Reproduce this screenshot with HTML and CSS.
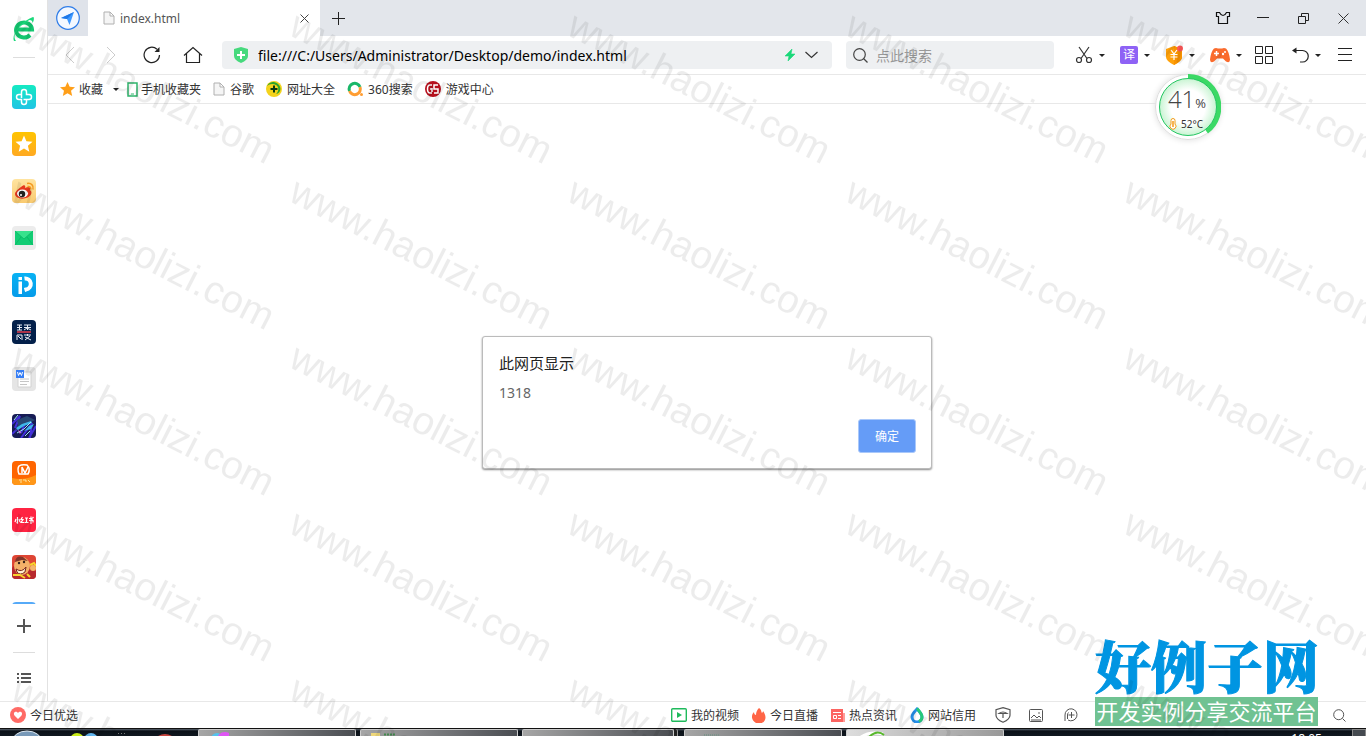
FILE: index.html
```html
<!DOCTYPE html>
<html lang="zh-CN">
  <head>
    <meta charset="utf-8" />
    <title>index.html</title>
    <link rel="stylesheet" href="styles.css">
  </head>
  <body>
    <div class="window">
      <aside class="sidebar">
        <a class="brand" href="#" aria-label="360">
          <svg width="24" height="26" viewBox="0 0 24 26"><path d="M5 13.500h15a8 7.500 0 1 0-2 5.500" fill="none" stroke="#13c770" stroke-width="4"/><path d="M2 25C-1 19 9 5 21 1c1.500 0 1 4-.5 6 0-2-1-3-3-3C9 8 3 16 2.500 20c0 2 .5 4 1.500 5z" fill="#1cd97c"/></svg>
        </a>
        <hr>
        <nav class="apps">
          <a class="app cyan" href="#" aria-label="医疗"><svg viewBox="0 0 24 24"><path d="M9.500 13V7a2.500 2.500 0 0 1 5 0v2.500H17a2.500 2.500 0 0 1 0 5h-5.500M14.500 14.500V17a2.500 2.500 0 0 1-5 0v-2.500H7a2.500 2.500 0 0 1 0-5h2.500" fill="none" stroke="#fff" stroke-width="1.500"/></svg></a>
          <a class="app yellow" href="#" aria-label="收藏"><svg viewBox="0 0 24 24"><path d="M12 3.500l2.400 5.700 6.100.5-4.600 4 1.400 6-5.300-3.200-5.300 3.200 1.400-6-4.600-4 6.100-.5z" fill="#fff"/></svg></a>
          <a class="app weibo" href="#" aria-label="微博"><svg viewBox="0 0 24 24"><path d="M9 8c3-3 5-2 4 1 4-2 6-1 5 2 3 2 1 7-4 8-6 2-11-1-11-4 0-2 3-5 6-7z" fill="#e6371d"/><ellipse cx="10.500" cy="14.500" rx="5.500" ry="4" fill="#fff"/><circle cx="10" cy="15" r="3.200" fill="#222"/><circle cx="9" cy="16" r="1" fill="#fff"/><path d="M15 4.500c4-1 7 2 6 6M15.500 7.500c2-.5 4 1 3 3" fill="none" stroke="#f49a20" stroke-width="1.500"/></svg></a>
          <a class="app mail" href="#" aria-label="邮箱"><svg viewBox="0 0 24 24"><path d="M3 5h18v14H3z" fill="#13cc74"/><path d="M3 5h18l-9 8z" fill="#38e28d"/><path d="M3 5l9 8 9-8M3 19l6-8M21 19l-6-8" fill="none" stroke="#08b763" stroke-width=".8"/></svg></a>
          <a class="app blue" href="#" aria-label="iP"><svg viewBox="0 0 24 24"><path d="M6.500 4h3.500v3H6.500zM6.500 8.500h3.500V21H6.500z" fill="#fff"/><path d="M12.500 5.500a5.500 5.500 0 0 1 1.500 11l-1.500.5" fill="none" stroke="#fff" stroke-width="4"/></svg></a>
          <a class="app navy" href="#" aria-label="环球网校"><svg viewBox="0 0 24 24"><path d="M5 5h5M7.500 5v5M5 7.500h5M5 10h5M12 5h7M15.500 5v5M12 7.500h7M12 10l3-2 4 2M5 20v-5h5v5M6 16l3 3M12 15h7M15.500 14v2M13 17l6 3M18 16l-5 4" fill="none" stroke="#e8edf5"/><path d="M5 12h14" stroke="#e43b4d" stroke-width="1.500"/></svg></a>
          <a class="app doc" href="#" aria-label="文档"><svg viewBox="0 0 24 24"><path d="M6 5h13v15H6z" fill="#fff" stroke="#d2d2d2"/><path d="M8 12h9M8 14.500h9M8 17.500h7" stroke="#c6c6c6"/><path d="M4 3h8v8H4z" fill="#367ef5"/><path d="M5.500 5l1 3.500L8 5.500l1.500 3L10.500 5" fill="none" stroke="#fff"/></svg></a>
          <a class="app game" href="#" aria-label="游戏"><svg viewBox="0 0 24 24"><path d="M0 10L8 2l-5 12M0 20L14 7 9 19M9 24l11-15-2 15M17 24l7-12" fill="none" stroke="#4330d9" stroke-width="2"/><path d="M5 6l10-4 8 4-6 3-10 4-4 5 3-8z" fill="#284873"/><path d="M4 14l6-4 9-3 1 2-8 3-6 4M12 17l5-5 5-2-3 5z" fill="#3eb7e9"/><path d="M5 19l7-4 7-7M2 6l4-5M13 22l5-5" fill="none" stroke="#9ee6f5"/><path d="M6 16l3 2-1 2z" fill="#eb81e4"/></svg></a>
          <a class="app orange" href="#" aria-label="芒果TV"><svg viewBox="0 0 24 24"><path d="M0 17q12 3 24-3v10H0z" fill="#ff9718"/><path d="M7 5q-2 3 0 8h9q3-5-1-9-5-1-8 1z" fill="none" stroke="#fff" stroke-width="1.500"/><path d="M10 6v6M10 6l3 6 3-6" fill="none" stroke="#fff" stroke-width="1.500"/><path d="M7 19h3M8 21h2M11 19h3v2M16 19l2 2" stroke="#fff5bf" stroke-width=".8" fill="none"/></svg></a>
          <a class="app red" href="#" aria-label="小红书"><svg viewBox="0 0 24 24"><path d="M5.500 9v6l-1-.5M4 11l-1 3M7 11l1 3M10.500 9L9 11.500h2L9 14.500h3M13 10h3M14.500 10v4.500M12.500 14.500h4M17 10.500h3v1.500M17 12.500h4v2M19 8.500V16M20.500 9l1 1" fill="none" stroke="#fff" stroke-width="1.200"/></svg></a>
          <a class="app face" href="#" aria-label="小游戏"><svg viewBox="0 0 24 24"><path d="M0 24V13l5-6h8l6 6 5 3v8z" fill="#b8292e"/><ellipse cx="10" cy="11" rx="8" ry="9" fill="#f4b069"/><path d="M3 7q1-7 8-5l5 4-6-1z" fill="#81352a"/><path d="M4 14q6 4 10-2l-1 5q-5 4-8 0z" fill="#fff0cf" stroke="#78251e"/><circle cx="7" cy="8" r="1.200" fill="#372019"/><circle cx="12" cy="7" r="1.200" fill="#372019"/><circle cx="21" cy="13" r="3" fill="#f4b76c"/><path d="M18 10l4-2 2 3M15 19l3 3M1 20h7l5 3" stroke="#f7d42c" stroke-width="2" fill="none"/></svg></a>
          <a class="app sky" href="#" aria-label="更多"></a>
        </nav>
        <button class="side-button add" aria-label="添加"><svg width="14" height="14"><path d="M7 0v14M0 7h14" stroke="#555" stroke-width="2"/></svg></button>
        <hr>
        <button class="side-button list" aria-label="列表"><svg width="14" height="12"><path d="M0 2h2M4 2h10M0 6h2M4 6h10M0 10h2M4 10h10" stroke="#555" stroke-width="2"/></svg></button>
      </aside>

      <div class="browser">
        <header class="tabs">
          <button class="pinned" aria-label="主页"><svg width="24" height="24"><circle cx="12" cy="12" r="11.300" fill="#f3f8ff" stroke="#2e7ce8" stroke-width="1.200"/><path d="M18 6l-4.500 13-2.500-6-6-1z" fill="#3d98ff"/><path d="M18 6l-7 7-6-1z" fill="#1c77e8"/></svg></button>
          <div class="tab">
            <svg width="12" height="14"><path d="M1 1h6l4 4v8H1zM7 1v4h4" fill="#f5f5f5" stroke="#b0b0b0"/></svg>
            <span>index.html</span>
            <button aria-label="关闭标签页"><svg width="9" height="9"><path d="M.5.5l8 8M8.500.5l-8 8" stroke="#444"/></svg></button>
          </div>
          <button class="new-tab" aria-label="新标签页"><svg width="13" height="13"><path d="M6.500 0v13M0 6.500h13" stroke="#222"/></svg></button>
          <div class="controls">
            <button aria-label="皮肤"><svg width="16" height="14"><path d="M4.500 1.500H1.500v4h2v7h9v-7h2v-4h-3Q10 4.500 8 4.500T4.500 1.500z" fill="none" stroke="#111" stroke-width="1.200"/></svg></button>
            <button aria-label="最小化"><svg width="12" height="12"><path d="M0 5.500h12" stroke="#222"/></svg></button>
            <button aria-label="还原"><svg width="11" height="11"><path d="M.5 3.500h7v7h-7zM3.500 3V.5h7v7H8" fill="none" stroke="#222"/></svg></button>
            <button aria-label="关闭"><svg width="11" height="11"><path d="M.5.5l10 10M10.500.5l-10 10" stroke="#333"/></svg></button>
          </div>
        </header>

        <div class="toolbar">
          <button class="nav" aria-label="后退"><svg width="10" height="18"><path d="M9 1L1 9l8 8" fill="none" stroke="#ccc"/></svg></button>
          <button class="nav" aria-label="前进"><svg width="10" height="18"><path d="M1 1l8 8-8 8" fill="none" stroke="#ccc"/></svg></button>
          <button class="nav" aria-label="刷新"><svg width="18" height="18"><path d="M16.500 9A7.700 7.700 0 1 1 14 3.200" fill="none" stroke="#222" stroke-width="1.200"/><path d="M16.500 1v5h-5z" fill="#222"/></svg></button>
          <button class="nav" aria-label="主页"><svg width="20" height="18"><path d="M1 9.500l9-8 9 8M3.500 7.500v9h13v-9" fill="none" stroke="#222" stroke-width="1.200"/></svg></button>
          <div class="address">
            <svg width="14" height="16"><path d="M7 0l7 2v7q0 4-7 7-7-3-7-7V2z" fill="#46d97d"/><path d="M7 4v8M3 8h8" stroke="#fff" stroke-width="2"/></svg>
            <input type="text" aria-label="地址" value="file:///C:/Users/Administrator/Desktop/demo/index.html">
            <svg width="10" height="12"><path d="M7 0L0 7h4l-1 5 7-7H6z" fill="#1bd87a" stroke="#1bd87a" stroke-width=".6"/></svg>
            <button aria-label="展开"><svg width="13" height="8"><path d="M.5 1l6 5.500 6-5.500" fill="none" stroke="#333" stroke-width="1.200"/></svg></button>
          </div>
          <div class="search">
            <svg width="15" height="15"><circle cx="6.500" cy="6.500" r="5.800" fill="none" stroke="#444" stroke-width="1.200"/><path d="M10.500 10.500l4 4" stroke="#444" stroke-width="1.200"/></svg>
            <input type="text" aria-label="搜索" placeholder="点此搜索">
          </div>
          <button class="tool" aria-label="截图"><svg width="18" height="18"><path d="M4 1l8 11.500M14 1L6 12.500" fill="none" stroke="#333" stroke-width="1.200"/><circle cx="4" cy="14" r="2.500" fill="none" stroke="#333" stroke-width="1.200"/><circle cx="14" cy="14" r="2.500" fill="none" stroke="#333" stroke-width="1.200"/></svg><i class="caret"></i></button>
          <button class="tool" aria-label="翻译"><span class="translate">译</span><i class="caret"></i></button>
          <button class="tool" aria-label="钱包"><svg width="18" height="20"><path d="M9 1l8 3v8q0 4-8 8-8-4-8-8V4z" fill="#ffa10a"/><path d="M9 1l8 3v8q0 4-8 8z" fill="#f99300"/><path d="M6 5l3 4 3-4M9 9v6M5.500 9.500h7M5.500 12h7" fill="none" stroke="#fff" stroke-width="1.200"/><circle cx="15" cy="3.500" r="3" fill="#ff5858"/></svg><i class="caret"></i></button>
          <button class="tool" aria-label="游戏"><svg width="20" height="16" viewBox="0 0 20 16"><path d="M4 1.500q2-1 4 0h4q2-1 4 0 3 3 4 11 0 4-4 2l-3-3H7l-3 3q-4 2-4-2 1-8 4-11z" fill="#fa6b2d"/><path d="M6.500 4v5M4 6.500h5" stroke="#fff" stroke-width="1.500"/><circle cx="13" cy="7" r="1.200" fill="#fff"/><circle cx="15" cy="5" r="1" fill="#fff"/></svg><i class="caret"></i></button>
          <button class="tool grid" aria-label="应用"><svg width="18" height="18"><path d="M.5.5h7v7h-7zM10.500.5h7v7h-7zM.5 10.500h7v7h-7zM10.500 10.500h7v7h-7z" fill="none" stroke="#222"/></svg></button>
          <button class="tool" aria-label="撤销"><svg width="18" height="16"><path d="M2 3.500h9.500a5.700 5.700 0 0 1 0 11.500H9" fill="none" stroke="#222" stroke-width="1.200"/><path d="M5.500.5L1 3.500l4.500 3z" fill="#222"/></svg><i class="caret"></i></button>
          <button class="menu" aria-label="菜单"><svg width="14" height="14"><path d="M0 .5h14M0 6.500h14M0 12.500h14" stroke="#222"/></svg></button>
        </div>

        <nav class="bookmarks">
          <a href="#" class="star"><svg width="15" height="14" viewBox="0 0 15 14"><path d="M7.500 0l2.200 4.800 5.300.5-4 3.500 1.200 5.200-4.700-2.800L2.800 14 4 8.800 0 5.300l5.300-.5z" fill="#ff9f19"/></svg>收藏 <i class="caret"></i></a>
          <a href="#" class="phone"><svg width="11" height="15"><path d="M1 1h9v13H1z" fill="#fff" stroke="#2eb56c" stroke-width="1.500"/><path d="M4 12h3" stroke="#2eb56c"/></svg>手机收藏夹</a>
          <a href="#"><svg width="12" height="14"><path d="M1 1h6l4 4v8H1zM7 1v4h4" fill="#f5f5f5" stroke="#b0b0b0"/></svg>谷歌</a>
          <a href="#"><svg width="16" height="16"><circle cx="8" cy="8" r="8" fill="#f4d31c"/><path d="M1 5a7 7 0 0 1 12-1c3 4 1 8-3 9 3-3 3-7 0-9S3 3 1 5z" fill="#2ba52c"/><path d="M8 4.500v7M4.500 8h7" stroke="#08370f" stroke-width="2"/></svg>网址大全</a>
          <a href="#"><svg width="16" height="16"><path d="M2.500 10a5.500 5.500 0 1 1 10.500-4" fill="none" stroke="#19b768" stroke-width="3"/><path d="M13 6A5.500 5.500 0 1 1 2.500 10" fill="none" stroke="#ff9d32" stroke-width="3"/><circle cx="14.500" cy="13.500" r="1.500" fill="#ff9d32"/></svg>360搜索</a>
          <a href="#"><svg width="16" height="16"><circle cx="8" cy="8" r="8" fill="#b6101d"/><path d="M7 4H5Q2.500 4 2.500 8T5 12h2M7 7v4M13 4H9v4h4v4H9M5 8h2" fill="none" stroke="#fff" stroke-width="1.500"/></svg>游戏中心</a>
        </nav>

        <main>
          <form class="alert" role="alertdialog" aria-labelledby="alert-title">
            <h1 id="alert-title">此网页显示</h1>
            <p>1318</p>
            <button type="button" class="ok">确定</button>
          </form>
        </main>
      </div>
    </div>

    <footer class="status">
      <a class="daily" href="#"><svg width="16" height="16"><circle cx="8" cy="8" r="8" fill="#ff6b66"/><path d="M8 12L4.500 8.500C2.500 5 6.500 3.500 8 6c1.500-2.500 5.500-1 3.500 2.500z" fill="#fff"/></svg>今日优选</a>
      <a href="#"><svg width="16" height="14"><rect x=".7" y=".7" width="14.600" height="12.600" rx="1" fill="none" stroke="#1fba5c" stroke-width="1.400"/><path d="M6 4v6l5-3z" fill="#1fba5c"/></svg>我的视频</a>
      <a href="#"><svg width="14" height="15"><path d="M7 0c3 2 2 4 3 5 1-1 1-2 1-2 3 4 4 9-1 12H4C-1 12-1 7 2 4c0 2 1 3 2 3 0-3 1-5 3-7z" fill="#ff6546"/></svg>今日直播</a>
      <a href="#"><svg width="14" height="13"><path d="M0 0h12v13H0z" fill="#fc6461"/><path d="M12 4h2v9h-2z" fill="#ff9c98"/><path d="M2 3.500h8M2.500 6.500h3v3h-3zM7 6.500h3M7 9.500h3" fill="none" stroke="#fff"/></svg>热点资讯</a>
      <a href="#"><svg width="14" height="16"><path d="M7 2q5 5 5 8a5 5 0 0 1-10 0q0-3 5-8z" fill="none" stroke="#258fe8" stroke-width="3"/><path d="M7 1.500q5 5.500 5 8.500t-3 4.500" fill="none" stroke="#26c979" stroke-width="3"/></svg>网站信用</a>
      <button class="shield" aria-label="安全"><svg width="16" height="16"><path d="M8 .7l7 2v5.500q0 4-7 7-7-3-7-7V2.700zM4 6.500q4-3 8 0H4zM8 6v5" fill="none" stroke="#555" stroke-width="1.200"/></svg></button>
      <button class="photo" aria-label="图片"><svg width="14" height="13"><rect x=".5" y=".5" width="13" height="12" rx="1" fill="none" stroke="#555"/><path d="M2 9l3-3 3 3 2-2 2 2M2 11h10" fill="none" stroke="#555"/><circle cx="10" cy="4" r=".8" fill="#555"/></svg></button>
      <button class="boost" aria-label="加速"><svg width="14" height="14"><path d="M1 13V7a6 6 0 1 1 3 5M3.500 11V7a3.500 3.500 0 0 1 1-2.500M7.500 4v6M4.500 7h6" fill="none" stroke="#555"/></svg></button>
      <button class="find" aria-label="查找"><svg width="13" height="13"><circle cx="5.700" cy="5.700" r="5" fill="none" stroke="#555"/><path d="M9.500 9.500l3 3" stroke="#555"/></svg></button>
    </footer>

    <div class="taskbar">
      <div class="start">
        <svg width="194" height="7"><ellipse cx="27" cy="13" rx="15" ry="11" fill="#7899b8" stroke="#dce7ef"/><circle cx="77" cy="11" r="7" fill="#c9ec19"/><circle cx="91" cy="11" r="7" fill="#61b7f1"/><path d="M118 4.500h8" stroke="#777" stroke-dasharray="1 2"/><ellipse cx="165" cy="11" rx="9" ry="6" fill="#c7443e"/></svg>
      </div>
      <button class="task" aria-label="浏览器"><svg width="30" height="7"><circle cx="18" cy="9" r="6" fill="#55c3ed"/><circle cx="26" cy="10" r="8" fill="#df55f4"/></svg></button>
      <button class="task" aria-label="文件夹"><svg width="40" height="7"><path d="M10 3h9v4h-9z" fill="#eed77b"/><path d="M23 4.500h11" stroke="#448a4f" stroke-width="2" stroke-dasharray="2 1"/></svg></button>
      <button class="task stack" aria-label="资源管理器"><svg width="30" height="7"><path d="M12 6h12v1H12z" fill="#d9a84f"/></svg></button>
      <button class="task" aria-label="编辑器"><svg width="40" height="7"><path d="M19 5h15" stroke="#7c948b" stroke-width="2" stroke-dasharray="1 1"/></svg></button>
      <button class="task active" aria-label="360浏览器"><svg width="50" height="7"><path d="M14 7q9-6 22-3" fill="none" stroke="#fff" stroke-width="3"/><path d="M22 7q8-8 15-2" fill="none" stroke="#58b82d" stroke-width="2"/></svg></button>
      <time>18:05</time>
      <button class="desktop" aria-label="显示桌面"></button>
    </div>

    <div class="gauge">
      <svg width="66" height="66"><defs><radialGradient id="glow"><stop offset=".6" stop-color="#fff"/><stop offset="1" stop-color="#c8f4d2"/></radialGradient></defs><circle cx="33" cy="33" r="32.500" fill="#fff" stroke="#ddd"/><path d="M33 2.500A30.500 30.500 0 0 1 51.500 57.500" fill="none" stroke="#3bd965" stroke-width="5"/><circle cx="33" cy="33" r="28.500" fill="url(#glow)" stroke="#23c661"/></svg>
      <div class="load">41<small>%</small></div>
      <div class="heat"><svg width="8" height="12"><path d="M2 6V2.500a2 2 0 0 1 4 0V6a3 3 0 1 1-4 0z" fill="#fff" stroke="#f39b18"/><path d="M4 3v6" stroke="#f39b18" stroke-width="1.500"/></svg>52°C</div>
    </div>

    <div class="site-logo">
      <strong>好例子网</strong>
      <span>开发实例分享交流平台</span>
    </div>

    <svg class="watermark" aria-hidden="true">
      <defs>
        <pattern id="mark" x="0" y="9" width="278" height="166" patternUnits="userSpaceOnUse">
          <text transform="translate(9 25) rotate(27)">www.haolizi.com</text>
        </pattern>
      </defs>
      <rect width="100%" height="100%" fill="url(#mark)"/>
    </svg>
  </body>
</html>
```
FILE: styles.css
```css
html, body {
  height: 100%;
  margin: 0;
}

body {
  position: relative;
  display: flex;
  flex-direction: column;
  overflow: hidden;
  background: #fff;
  color: #333;
  font: 12px "Noto Sans", "Noto Sans CJK SC", sans-serif;
}

a {
  color: inherit;
  text-decoration: none;
}

button {
  display: flex;
  align-items: center;
  justify-content: center;
  padding: 0;
  border: 0;
  background: none;
  font: inherit;
  cursor: pointer;
}

input {
  min-width: 0;
  padding: 0;
  border: 0;
  outline: 0;
  background: none;
  font: inherit;
}

svg {
  display: block;
  flex: none;
}

.window {
  flex: 1 1 0;
  min-height: 0;
  display: flex;
}

/* left icon strip */
.sidebar {
  width: 47px;
  border-right: 1px solid #e2e2e2;
  display: flex;
  flex-direction: column;
  align-items: center;
}
.sidebar hr {
  width: 22px;
  height: 1px;
  margin: 0;
  border: 0;
  background: #ddd;
}
.brand {
  height: 41px;
  padding-top: 16px;
}
.apps {
  flex: 1 1 0;
  margin-top: 27px;
  display: flex;
  flex-direction: column;
  gap: 23px;
  overflow: hidden;
}
.app {
  flex: none;
  width: 24px;
  height: 24px;
  border-radius: 4px;
  overflow: hidden;
}
.cyan { background: linear-gradient(#15eac2, #20c4e5); }
.yellow { background: linear-gradient(#ffc400, #ffa922); }
.weibo { background: linear-gradient(#ffe4a0, #f9ca70); }
.mail { background: #ececec; }
.blue { background: linear-gradient(#08b2f4, #059be9); }
.navy { background: #03204a; }
.doc { background: #e5e5e5; }
.game { background: #171c55; }
.orange { background: #ff6500; }
.red { background: #ff2442; }
.face { background: #de4534; }
.sky { background: #56aaf8; }
.side-button {
  width: 100%;
}
.add {
  height: 48px;
  padding-bottom: 4px;
}
.list {
  height: 48px;
  padding-top: 2px;
}

.browser {
  flex: 1 1 0;
  min-width: 0;
  display: flex;
  flex-direction: column;
}

.tabs {
  height: 36px;
  display: flex;
  background: #e3e6eb;
}
.pinned {
  width: 40px;
  background: #dfe3ea;
}
.tab {
  width: 206px;
  padding: 0 11px 0 15px;
  display: flex;
  align-items: center;
  gap: 5px;
  background: #fff;
  color: #555;
  font-size: 12px;
}
.tab button {
  margin-left: auto;
}
.new-tab {
  width: 37px;
}
.controls {
  margin-left: auto;
  padding-right: 3px;
  display: flex;
}
.controls button {
  width: 40px;
}

.toolbar {
  height: 38px;
  padding: 0 14px 0 1px;
  display: flex;
  align-items: center;
  border-bottom: 1px solid #e8e8e8;
}
.nav {
  width: 41px;
  height: 36px;
}
.address, .search {
  height: 28px;
  margin-left: 9px;
  display: flex;
  align-items: center;
  border-radius: 4px;
  background: #eef0f2;
}
.address {
  flex: 1 1 0;
  gap: 10px;
  padding: 0 14px 0 12px;
  font-size: 14px;
}
.address input {
  flex: 1 1 0;
  color: #000;
}
.search {
  width: 194px;
  margin: 0 21px 0 14px;
  padding: 0 7px;
  gap: 8px;
  font-size: 14px;
}
.search input::placeholder {
  color: #999;
}
.tool {
  width: 45px;
  height: 36px;
  justify-content: flex-start;
  gap: 6px;
}
.tool.grid {
  width: 36px;
}
.translate {
  width: 18px;
  height: 18px;
  border-radius: 2px;
  background: #8e62f5;
  color: #fff;
  line-height: 17px;
}
.menu {
  margin-left: 2px;
}
.caret {
  border: 3px solid transparent;
  border-top-color: #222;
  border-bottom: 0;
}

.bookmarks {
  height: 28px;
  padding-left: 12px;
  display: flex;
  align-items: center;
  gap: 12px;
  border-bottom: 1px solid #e8e8e8;
}
.bookmarks a {
  display: flex;
  align-items: center;
  gap: 5px;
}
.bookmarks .star {
  gap: 4px;
}
.bookmarks .phone {
  gap: 3px;
  margin-left: -4px;
}
.bookmarks .caret {
  margin-left: 6px;
}

main {
  flex: 1 1 0;
  display: flex;
  align-items: center;
  justify-content: center;
}

.alert {
  width: 417px;
  padding: 16px 15px 15px 16px;
  border: 1px solid #bbb;
  border-radius: 3px;
  background: #fff;
  box-shadow: 0 1px 2px #888;
}
.alert h1 {
  margin: 0;
  color: #222;
  font-size: 15px;
  font-weight: normal;
  line-height: 20px;
}
.alert p {
  margin: 10px 0 16px;
  color: #666;
  font-size: 14px;
  line-height: 20px;
}
.ok {
  width: 58px;
  height: 34px;
  margin-left: auto;
  border: 1px solid #a9c8fa;
  border-radius: 3px;
  background: #659cf7;
  color: #fff;
}

.status {
  height: 26px;
  padding: 0 20px 0 10px;
  display: flex;
  align-items: center;
  border-top: 1px solid #e8e8e8;
}
.status a {
  display: flex;
  align-items: center;
  gap: 4px;
  margin-right: 13px;
}
.status .daily {
  margin-right: auto;
}
.shield {
  margin-left: 6px;
}
.photo {
  margin-left: 18px;
}
.boost {
  margin-left: 21px;
}
.find {
  margin-left: 255px;
}

/* top edge of the system taskbar */
.taskbar {
  height: 7px;
  display: flex;
  gap: 4px;
  overflow: hidden;
  border-top: 1px solid #111;
  background: linear-gradient(#5b6570, #0a1017 2px, #101820);
}
.start {
  width: 194px;
}
.task {
  width: 158px;
  height: 8px;
  justify-content: flex-start;
  border: 1px solid #ccc;
  border-bottom: 0;
  border-radius: 2px 2px 0 0;
  background: linear-gradient(90deg, #a6a6a6, #4a4d52);
}
.task.stack {
  width: 152px;
  margin-right: 6px;
  box-shadow: 3px 0 #222, 4px 0 #999;
}
.task.active {
  background: linear-gradient(90deg, #ddd, #999);
}
.taskbar time {
  margin-left: auto;
  margin-right: 26px;
  padding-top: 3px;
  color: #fff;
  line-height: 14px;
}
.desktop {
  width: 14px;
  height: 8px;
  border: 1px solid #888;
  background: #454a50;
}

/* floating load meter */
.gauge {
  position: absolute;
  top: 74px;
  right: 145px;
  width: 66px;
  height: 66px;
  border-radius: 50%;
  box-shadow: 0 0 6px #ddd;
}
.gauge > svg {
  position: absolute;
}
.load, .heat {
  position: relative;
  display: flex;
  justify-content: center;
}
.load {
  align-items: baseline;
  padding-top: 11px;
  padding-right: 2px;
  color: #444;
  font: 300 24px/28px "Open Sans", sans-serif;
}
.load small {
  font-size: 13px;
  font-weight: normal;
}
.heat {
  align-items: center;
  gap: 4px;
  padding-right: 4px;
  font-size: 10px;
  line-height: 14px;
}

.site-logo {
  position: absolute;
  right: 48px;
  bottom: 10px;
  width: 223px;
}
.site-logo strong {
  display: block;
  margin-bottom: 2px;
  color: #0095e2;
  font: 900 56px/62px "Noto Serif CJK SC", "Noto Sans CJK SC", serif;
  -webkit-text-stroke: 1px #0095e2;
  white-space: nowrap;
}
.site-logo span {
  display: block;
  background: #70c292;
  color: #fff;
  font-size: 22px;
  line-height: 29px;
  text-align: center;
  white-space: nowrap;
}

.watermark {
  position: absolute;
  inset: 0;
  width: 100%;
  height: 100%;
  pointer-events: none;
}
.watermark text {
  fill: rgba(0, 0, 0, .075);
  font: 39px "Liberation Sans", sans-serif;
}
```
